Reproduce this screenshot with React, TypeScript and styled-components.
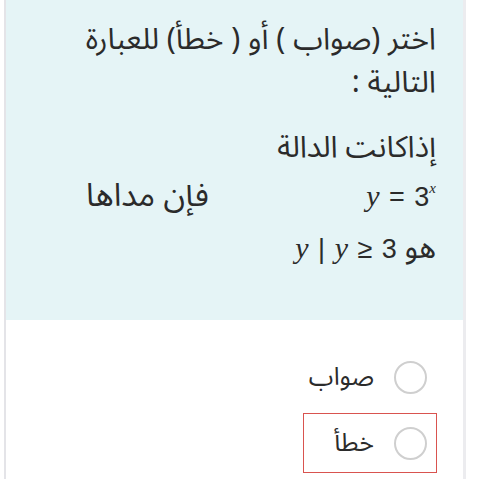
import React from 'react';
import styled, { createGlobalStyle } from 'styled-components';

const GlobalStyle = createGlobalStyle`
  html, body {
    margin: 0;
    padding: 0;
    background: #ffffff;
  }
  body {
    font-family: "Noto Sans Arabic", "DejaVu Sans", sans-serif;
    color: #2b2b2b;
  }
`;

const Card = styled.div`
  margin-left: 4px;
  width: 462px;
  height: 479px;
  border-left: 2px solid #e4e4e8;
  border-right: 3px solid #ececef;
  box-sizing: border-box;
  overflow: hidden;
`;

const Question = styled.div`
  direction: rtl;
  background: #e5f4f6;
  height: 320px;
  padding: 18px 27px 0 20px;
  box-sizing: border-box;
`;

const Prompt = styled.p`
  margin: 0 0 22px 0;
  max-width: 362px;
  font-size: 30px;
  line-height: 43px;
`;

const Line = styled.p<{ $top?: number }>`
  margin: ${(p) => p.$top ?? 0}px 0 0 0;
  font-size: 30px;
  line-height: 43px;
  white-space: nowrap;
`;

const SplitLine = styled.div`
  display: flex;
  justify-content: space-between;
  align-items: center;
  padding-left: 60px;
  height: 54px;
  font-size: 32px;
`;

const Math = styled.span`
  direction: ltr;
  unicode-bidi: isolate;
  font-family: "Liberation Sans", sans-serif;
  font-size: 27px;
  word-spacing: 2px;
`;

const Var = styled.i`
  font-family: "Liberation Serif", serif;
  font-size: 30px;
`;

const Sup = styled.sup`
  font-family: "Liberation Serif", serif;
  font-style: italic;
  font-size: 15px;
  vertical-align: 13px;
`;

const Options = styled.div`
  direction: rtl;
  display: flex;
  flex-direction: column;
  align-items: flex-start;
  gap: 6px;
  padding: 27px 26px 0 0;
`;

const Option = styled.label<{ $flagged?: boolean }>`
  display: flex;
  align-items: center;
  gap: 20px;
  height: 60px;
  padding: 0 9px 0 30px;
  box-sizing: border-box;
  border: 1.5px solid ${(p) => (p.$flagged ? '#d9534f' : 'transparent')};
  font-size: 25px;
  cursor: pointer;
`;

const Radio = styled.span`
  width: 33px;
  height: 33px;
  border-radius: 50%;
  border: 2px solid #cfcfcf;
  box-sizing: border-box;
  background: #ffffff;
`;

export default function App() {
  return (
    <>
      <GlobalStyle />
      <Card>
        <Question>
          <Prompt>اختر (صواب ) أو ( خطأ) للعبارة التالية :</Prompt>
          <Line>إذاكانت الدالة</Line>
          <SplitLine>
            <Math>
              <Var>y</Var> = 3<Sup>x</Sup>
            </Math>
            <span>فإن مداها</span>
          </SplitLine>
          <Line $top={3}>
            هو{' '}
            <Math>
              <Var>y</Var> | <Var>y</Var> ≥ 3
            </Math>
          </Line>
        </Question>
        <Options>
          <Option>
            <Radio />
            <span>صواب</span>
          </Option>
          <Option $flagged>
            <Radio />
            <span>خطأ</span>
          </Option>
        </Options>
      </Card>
    </>
  );
}
